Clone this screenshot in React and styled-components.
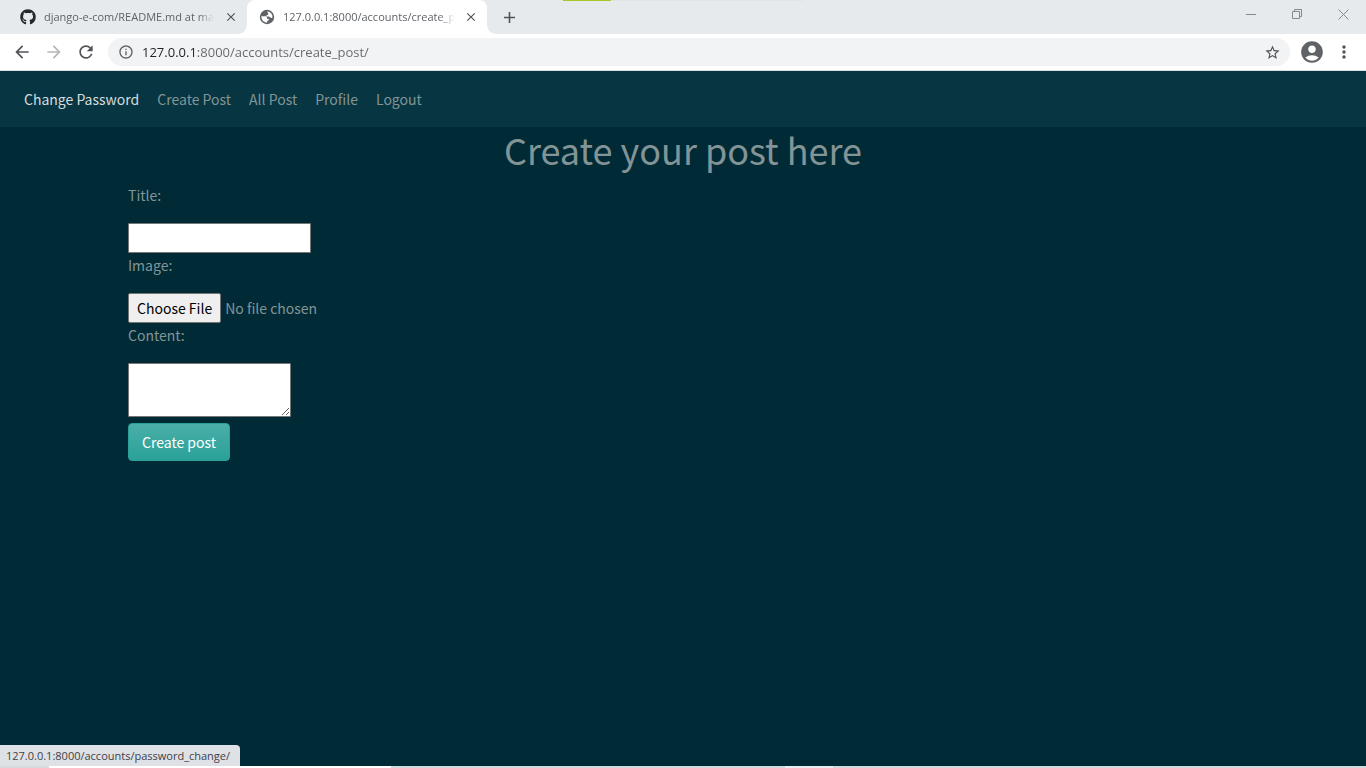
import React from "react";
import styled, { createGlobalStyle } from "styled-components";
import { FaGithub } from "react-icons/fa";
import {
  MdArrowBack,
  MdArrowForward,
  MdRefresh,
  MdInfoOutline,
  MdStarBorder,
  MdAccountCircle,
  MdMoreVert,
  MdClose,
  MdAdd,
} from "react-icons/md";

const GlobalStyle = createGlobalStyle`
  *, *::before, *::after { box-sizing: border-box; }
  body { margin: 0; background: #002b36; }
  button { font: inherit; cursor: pointer; }
`;

const uiFont = `"Open Sans", "Noto Sans", sans-serif`;
const siteFont = `"Noto Sans CJK SC", "Open Sans", sans-serif`;

const Window = styled.div`
  position: relative;
  display: flex;
  flex-direction: column;
  min-height: 100vh;
  font-family: ${uiFont};
`;

const TabStrip = styled.div`
  position: relative;
  display: flex;
  height: 34px;
  padding-left: 8px;
  background: #e6eaed;
`;

const Progress = styled.div`
  position: absolute;
  top: 0;
  left: 50%;
  width: 240px;
  height: 1px;
  margin-left: -120px;
  background: linear-gradient(to right, #a4c926 20%, #e3e3e3 20%);
`;

const Tab = styled.div`
  position: relative;
  display: flex;
  align-items: center;
  width: ${(p) => (p.$active ? 240 : 239)}px;
  padding: 0 10px 0 12px;
  gap: 8px;
  color: #5f6368;
  background: ${(p) => (p.$active ? "#fff" : "transparent")};
  border-radius: 8px 8px 0 0;

  &::before,
  &::after {
    content: ${(p) => (p.$active ? `""` : "none")};
    position: absolute;
    bottom: 0;
    width: 8px;
    height: 8px;
  }
  &::before {
    right: 100%;
    background: radial-gradient(circle at 0 0, transparent 7px, #fff 8px);
  }
  &::after {
    left: 100%;
    background: radial-gradient(circle at 100% 0, transparent 7px, #fff 8px);
  }
  > svg { flex: none; }
`;

const TabTitle = styled.button`
  min-width: 0;
  padding: 0;
  border: 0;
  background: none;
  color: inherit;
  font-size: 11px;
  line-height: 16px;
  text-align: left;
  white-space: nowrap;
  overflow: hidden;
  mask-image: linear-gradient(to left, transparent, #000 16px);
`;

const IconButton = styled.button`
  display: flex;
  flex: none;
  align-items: center;
  justify-content: center;
  width: ${(p) => p.$size || 20}px;
  height: ${(p) => p.$size || 20}px;
  padding: 0;
  border: 0;
  background: none;
  color: ${(p) => p.$color || "#505357"};
  > svg { flex: none; }
`;

const TabClose = styled(IconButton)`
  width: 12px;
  height: 16px;
  margin-left: auto;
`;

const NewTab = styled(IconButton)`
  align-self: center;
  margin-left: 12px;
`;

const WindowControls = styled.div`
  display: flex;
  margin-left: auto;
`;

const WindowButton = styled.button`
  display: flex;
  align-items: center;
  justify-content: center;
  width: 46px;
  height: 28px;
  padding: 0;
  border: 0;
  background: none;
  color: #85898c;
`;

const Toolbar = styled.div`
  display: flex;
  align-items: center;
  height: 37px;
  padding: 0 12px;
  gap: 12px;
  background: #fff;
  border-bottom: 1px solid #dadce0;
`;

const AddressBar = styled.div`
  display: flex;
  flex: 1;
  align-items: center;
  height: 28px;
  padding: 0 10px;
  gap: 8px;
  border-radius: 14px;
  background: #f1f3f4;
  color: #5f6368;
`;

const Address = styled.input`
  flex: 1;
  min-width: 0;
  height: 20px;
  padding: 0;
  border: 0;
  outline: 0;
  font-family: ${uiFont};
  font-size: 13px;
  line-height: 20px;
  color: transparent;
  caret-color: #202124;
  background: linear-gradient(to right, #202124 54px, #63676b 54px);
  background-clip: text;
  -webkit-background-clip: text;
`;

const Navbar = styled.nav`
  display: flex;
  align-items: center;
  height: 56px;
  padding: 0 16px;
  gap: 2px;
  background: #073642;
  font-family: ${siteFont};
`;

const NavLink = styled.a`
  padding: 8px;
  font-size: 14px;
  line-height: 24px;
  color: ${(p) => (p.$active ? "#d5dcde" : "#839496")};
  text-decoration: none;
`;

const Main = styled.main`
  flex: 1;
  font-family: ${siteFont};
  color: #839496;
`;

const Heading = styled.h1`
  margin: 0 0 12px;
  font-size: 36px;
  font-weight: 400;
  line-height: 44px;
  text-align: center;
`;

const Form = styled.form`
  display: flex;
  flex-direction: column;
  align-items: flex-start;
  padding: 0 128px;
  font-size: 14px;
  line-height: 24px;
`;

const Label = styled.label`
  margin-bottom: 16px;
`;

const TextInput = styled.input`
  width: 183px;
  height: 30px;
  border: 1px solid #767676;
  border-radius: 1px;
  background: #fff;
  font: inherit;
`;

const FileInput = styled.input`
  height: 30px;
  font: inherit;
  color: inherit;

  &::file-selector-button {
    height: 30px;
    margin: 0 4px 0 0;
    padding: 0 8px;
    border: 1px solid #767676;
    border-radius: 2px;
    background: #efefef;
    color: #000;
    font: inherit;
  }
`;

const TextArea = styled.textarea`
  width: 163px;
  height: 54px;
  margin-bottom: 6px;
  border: 1px solid #767676;
  border-radius: 1px;
  background: #fff;
  font: inherit;
`;

const SubmitButton = styled.button`
  height: 38px;
  padding: 0 13px;
  border: 1px solid #2aa198;
  border-radius: 4px;
  background: linear-gradient(#4aafa7, #2aa198);
  color: #fff;
`;

const StatusBubble = styled.div`
  position: absolute;
  left: 0;
  bottom: 2px;
  height: 21px;
  padding: 0 10px 0 6px;
  border-radius: 0 4px 0 0;
  background: #dee1e6;
  color: #3f4245;
  font-size: 11px;
  line-height: 21px;
`;

const BottomEdge = styled.div`
  height: 2px;
  background: linear-gradient(
    to right,
    #d5d9dc 49px,
    #fff 49px 391px,
    #cfdadc 391px 785px,
    #e9efef 785px 833px,
    #cfdadc 833px
  );
`;

const GlobeIcon = () => (
  <svg width="16" height="16" viewBox="0 0 16 16">
    <circle cx="8" cy="8" r="7.200" fill="#5f6368" />
    <path
      d="M8.600 2.400c1.900.2 3.700 1.500 4.400 3.300.5 1.200.5 2.200.3 3.200-.8.3-1.700.1-2.200-.6-.4-.6-1-.9-1.800-.9H7.500c-.3-1 .2-1.500 1.200-1.600.6-.1.700-.7.600-1.300-.1-.8-.9-1-1.300-1.400zM2.400 7.200l4.300.1c.9.1 1.300.8 1.300 1.600 0 .7.500.9 1.200.9.700.1.900.8.600 1.400l-1.200.6c-.5.300-.4 1-.5 1.900-2.600-.1-4.700-1.700-5.500-4.100-.2-.9-.3-1.700-.2-2.400z"
      fill="#fff"
    />
  </svg>
);

const navItems = ["Change Password", "Create Post", "All Post", "Profile", "Logout"];

export default function App() {
  return (
    <Window>
      <GlobalStyle />
      <TabStrip>
        <Progress />
        <Tab>
          <FaGithub size={16} color="#24292e" />
          <TabTitle type="button">django-e-com/README.md at ma</TabTitle>
          <TabClose aria-label="Close tab"><MdClose size={14} /></TabClose>
        </Tab>
        <Tab $active>
          <GlobeIcon />
          <TabTitle type="button">127.0.0.1:8000/accounts/create_p</TabTitle>
          <TabClose aria-label="Close tab"><MdClose size={14} /></TabClose>
        </Tab>
        <NewTab aria-label="New tab"><MdAdd size={19} /></NewTab>
        <WindowControls>
          <WindowButton aria-label="Minimize">
            <svg width="11" height="11" stroke="currentColor" fill="none"><path d="M0 5.5h10" /></svg>
          </WindowButton>
          <WindowButton aria-label="Restore">
            <svg width="11" height="11" stroke="currentColor" fill="none"><path d="M.5 2.5h7v7h-7zM2.500 2.500v-2h7v7h-2" /></svg>
          </WindowButton>
          <WindowButton aria-label="Close">
            <svg width="11" height="11" stroke="currentColor" fill="none"><path d="M.5.5l10 10M10.500.5l-10 10" /></svg>
          </WindowButton>
        </WindowControls>
      </TabStrip>

      <Toolbar>
        <IconButton aria-label="Back"><MdArrowBack size={20} /></IconButton>
        <IconButton aria-label="Forward" $color="#b5b7b9"><MdArrowForward size={20} /></IconButton>
        <IconButton aria-label="Reload"><MdRefresh size={20} /></IconButton>
        <AddressBar>
          <MdInfoOutline size={16} />
          <Address aria-label="Address" defaultValue="127.0.0.1:8000/accounts/create_post/" />
          <IconButton aria-label="Bookmark" $size={16}><MdStarBorder size={17} /></IconButton>
        </AddressBar>
        <IconButton aria-label="Account" $color="#5f6368"><MdAccountCircle size={26} /></IconButton>
        <IconButton aria-label="Menu"><MdMoreVert size={20} /></IconButton>
      </Toolbar>

      <Navbar>
        {navItems.map((item, i) => (
          <NavLink key={item} href="#" $active={i === 0}>{item}</NavLink>
        ))}
      </Navbar>

      <Main>
        <Heading>Create your post here</Heading>
        <Form onSubmit={(e) => e.preventDefault()}>
          <Label htmlFor="title">Title:</Label>
          <TextInput id="title" type="text" />
          <Label htmlFor="image">Image:</Label>
          <FileInput id="image" type="file" />
          <Label htmlFor="content">Content:</Label>
          <TextArea id="content" />
          <SubmitButton type="submit">Create post</SubmitButton>
        </Form>
      </Main>

      <StatusBubble>127.0.0.1:8000/accounts/password_change/</StatusBubble>
      <BottomEdge />
    </Window>
  );
}
